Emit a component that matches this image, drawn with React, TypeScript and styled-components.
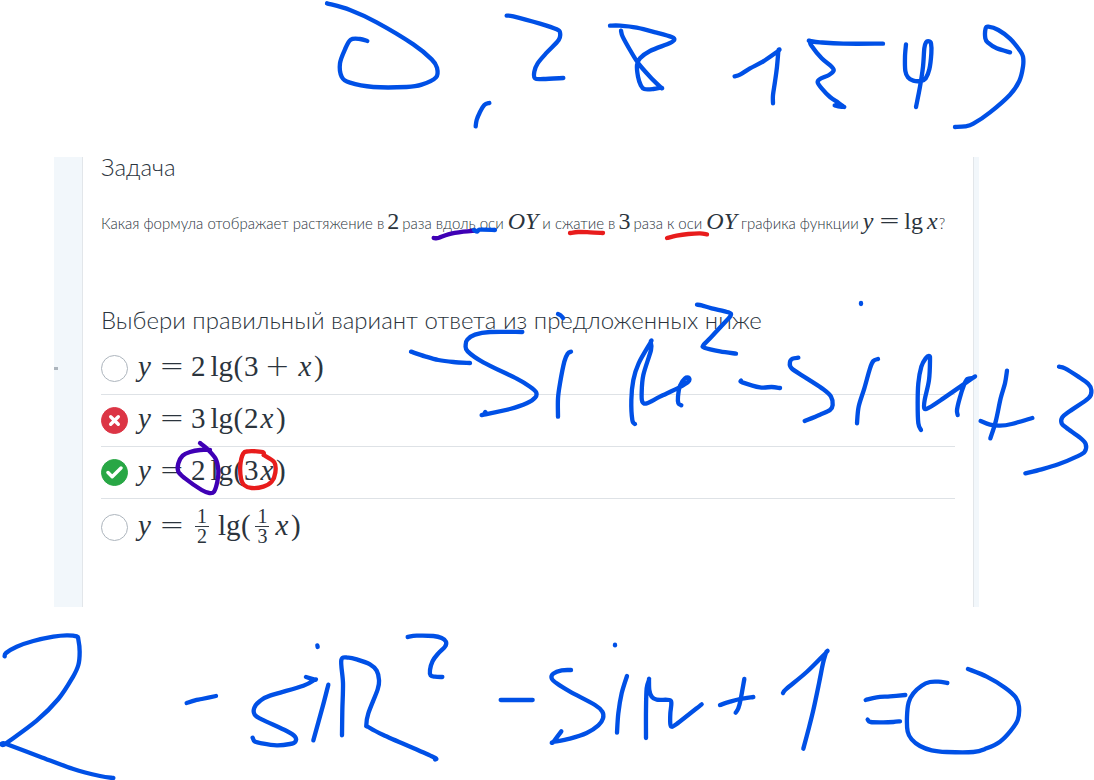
import React, { ReactNode } from 'react';
import styled, { createGlobalStyle } from 'styled-components';

const GlobalStyle = createGlobalStyle`
  *, *::before, *::after { box-sizing: border-box; }
  body { margin: 0; background: #fff; }
`;

const Board = styled.div`
  position: relative;
  min-height: 100vh;
  padding: 157px 115px 0 54px;
  overflow: hidden;
  color: #2b343d;
  font-family: Lato, 'Open Sans', sans-serif;
  font-weight: 300;
`;

const Page = styled.div`
  display: flex;
  min-height: 450px;
  background: #f2f7fb;
`;

const Gutter = styled.div`
  display: flex;
  align-items: center;
  width: 28px;
  padding-bottom: 28px;
`;

const Notch = styled.span`
  width: 4px;
  height: 3px;
  background: #adb5bd;
`;

const Card = styled.main`
  flex: 1;
  min-width: 0;
  margin-right: 5px;
  padding: 0 18px;
  background: #fff;
  border: 1px solid #e2e6ea;
  border-width: 0 1px;
`;

const Title = styled.h1`
  margin: 0;
  font-size: 24px;
  font-weight: 300;
  line-height: 20px;
`;

const Formula = styled.span<{ $big?: boolean }>`
  display: inline-flex;
  align-items: ${(p) => (p.$big ? 'center' : 'baseline')};
  padding-bottom: ${(p) => (p.$big ? 6 : 0)}px;
  font-family: 'Liberation Serif', serif;
  font-weight: 400;
  font-size: ${(p) => (p.$big ? 29 : 24)}px;
  line-height: 32px;
`;

const Var = styled.i`
  padding: 0 2px;
`;

const Sign = styled.span<{ $big?: boolean }>`
  width: ${(p) => (p.$big ? 38 : 30)}px;
  text-align: center;
  font-family: 'DejaVu Sans Light', 'DejaVu Sans', sans-serif;
  font-weight: 200;
  font-size: ${(p) => (p.$big ? 30 : 26)}px;
`;

const Func = styled.span`
  padding-left: 5px;
`;

const Paren = styled.span`
  width: 11px;
  text-align: center;
`;

const Fraction = styled.span`
  display: inline-flex;
  flex-direction: column;
  width: 14px;
  margin: 4px 4px 0;
  text-align: center;
  font-size: 20px;
  line-height: 19px;
  > :first-child { border-bottom: 1px solid #343d46; }
`;

const Question = styled.p`
  display: flex;
  align-items: baseline;
  gap: 3px;
  margin: 27px 0 0;
  font-size: 15px;
  line-height: 32px;
  white-space: nowrap;
  ${Var} { padding: 0 1px; }
  ${Func} { padding-left: 3px; }
`;

const Options = styled.fieldset`
  margin: 69px 0 0;
  padding: 0;
  border: 0;
  min-width: 0;
`;

const Legend = styled.legend`
  padding: 0;
  font-size: 24px;
  line-height: 24px;
  white-space: nowrap;
`;

const Option = styled.label<{ $tall?: boolean }>`
  display: flex;
  align-items: center;
  gap: 8px;
  height: ${(p) => (p.$tall ? 58 : 52)}px;
  border-bottom: 1px solid ${(p) => (p.$tall ? 'transparent' : '#dee2e6')};
`;

const OptionList = styled.div`
  padding-top: 11px;
`;

type Mark = 'none' | 'wrong' | 'right';
const markFill = { none: '#fff', wrong: '#dc3545', right: '#28a745' };

const RadioBox = styled.span`
  display: grid;
  width: 27px;
  height: 27px;
  > * { grid-area: 1 / 1; place-self: center; }
`;

const Radio = styled.input<{ $mark: Mark }>`
  appearance: none;
  width: 27px;
  height: 27px;
  margin: 0;
  border-radius: 50%;
  border: 1px solid ${(p) => (p.$mark === 'none' ? '#adb5bd' : markFill[p.$mark])};
  background: ${(p) => markFill[p.$mark]};
`;

const Ink = styled.svg`
  position: absolute;
  inset: 0;
  width: 100%;
  height: 100%;
  pointer-events: none;
  fill: none;
  stroke-linecap: round;
  stroke-linejoin: round;
`;

const blue = '#0050e6';
const violet = '#3f00b5';
const red = '#e81c1c';

type Group = { x: number; y: number; color: string; strokes: string[] };

// Pen samples, three units to a pixel, relative to the origin of each group.
const groups: Group[] = [
  {
    x: 310, y: 0, color: blue,
    strokes: [
      '51,10 120,30 200,67 310,133 365,178 381,203 378,232 335,254 290,261 190,261 120,248 95,230 90,190 105,148 122,119 150,117 172,123',
      '590,47 610,49 690,71 740,88 750,98 746,120 710,158 683,190 673,215 675,235 700,237 760,234',
      '900,77 930,77 980,83 1040,98 1085,111 1093,119 1080,129 1020,153 990,175 981,195 984,230 992,255 1003,267 1030,267 1053,263 1053,263 1020,230 985,190 960,150 938,110 933,92',
      '538,309 523,315 509,338 500,360 497,379',
    ],
  },
  {
    x: 680, y: 0, color: blue,
    strokes: [
      '164,229 180,224 210,205 250,184 295,153 295,153 291,200 285,245 279,285 279,310',
      '609,131 490,131 420,127 389,123 389,123 395,138 425,175 455,200 461,212 447,225 420,237 413,247 425,265 450,291 475,308 491,320 491,320 480,320 464,316',
      '678,133 675,170 676,213 684,232 700,242 722,243 737,235 748,208 754,160 753,130 747,124 738,127 733,145 729,200 720,260 708,321',
      '990,157 950,145 924,128 916,115 917,85 925,80 955,90 990,116 1020,152 1029,170 1029,200 1018,243 990,284 930,337 880,371 855,379 825,381',
    ],
  },
  {
    x: 400, y: 290, color: blue,
    strokes: [
      '33,185 75,199 115,210 160,216 210,219',
      '367,126 270,126 225,134 202,149 197,165 203,184 250,217 350,266 390,290 408,306 406,322 380,340 330,357 251,374 251,374 256,366',
      '513,185 503,191 493,215 480,280 474,325 474,380',
      '474,72 482,76 489,84',
      '705,402 697,390 694,330 700,270 716,220 752,157 752,157 753,180 730,255 725,310 727,335 740,340 780,320 838,292 865,275 867,264 855,265 840,287 834,320 835,340 844,346',
      '891,44 905,46 935,55 985,67 992,77 970,102 925,150 910,166 913,173 960,184 1008,191',
      '1023,272 1027,277 1080,292 1115,291 1140,294',
    ],
  },
  {
    x: 730, y: 290, color: blue,
    strokes: [
      '393,39 393,42',
      '205,203 188,206 180,216 185,235 230,265 280,298 303,320 308,345 300,360 270,374 224,393',
      '444,207 430,213 420,235 403,295 386,350 381,400',
      '573,420 565,400 563,340 565,280 574,230 587,205 598,198 600,210 597,270 584,330 583,355 597,353 640,325 728,264 728,264 712,267 702,285 689,325 681,360 683,375',
      '752,393 780,404 810,407 845,402 907,384',
      '831,242 825,280 812,325 797,395 781,445',
      '987,230 1005,235 1045,260 1075,282 1084,300 1076,324 1020,363 997,382 995,400 1010,414 1050,443 1067,462 1064,485 1040,500 985,523 935,538 886,550',
    ],
  },
  {
    x: 0, y: 600, color: blue,
    strokes: [
      '14,169 18,159 50,140 100,123 160,110 200,106 230,109 235,118 239,155 235,195 218,232 175,297 110,362 17,431 17,431 120,470 220,507 300,528 340,534',
      '560,309 585,301 605,297 648,288',
      '952,136 953,141',
      '918,231 944,239 944,239 910,257 810,287 780,303 763,323 764,344 785,358 860,393 885,410 886,425 870,432 830,436 785,430 764,424 758,413',
      '985,254 968,320 940,421',
    ],
  },
  {
    x: 300, y: 600, color: blue,
    strokes: [
      '126,406 127,330 129,250 124,180 145,173 170,178 210,193 230,212 237,240 233,268 205,340 199,375 205,381 250,405 395,469 405,478',
      '323,111 350,107 400,108 425,114 438,125 435,140 415,160 398,183 390,210 392,226 405,230 427,231',
      '602,300 698,300',
    ],
  },
  {
    x: 540, y: 600, color: blue,
    strokes: [
      '93,210 65,211 40,221 35,235 50,250 90,275 165,315 187,335 189,355 175,376 140,399 90,416 40,426 40,426 64,394',
      '225,134 225,136',
      '261,228 245,280 235,340 231,398',
      '318,414 318,330 320,265 327,240 327,240 328,270 335,290 350,299 388,300 394,310 391,340 391,372 395,380 410,372 485,313',
      '540,315 570,305 600,297 640,291',
      '613,237 602,298 595,325 587,338',
      '729,279 740,266 800,216 858,158 858,158 849,190 837,250 820,330 805,390 790,446',
    ],
  },
  {
    x: 770, y: 600, color: blue,
    strokes: [
      '287,300 320,292 360,289 406,285',
      '293,359 302,366 340,367 370,366 390,364',
      '532,249 505,245 480,246 455,257 430,280 416,307 411,350 413,395 425,418 450,438 485,451 530,456 610,456 650,445 690,425 720,395 743,360 747,320 737,292 705,263 650,230 594,207',
    ],
  },
  { x: 50, y: 145, color: violet, strokes: ['1151,279 1165,279 1195,268 1240,260 1275,257'] },
  { x: 50, y: 145, color: blue, strokes: ['1272,255 1282,260 1290,254 1335,255'] },
  {
    x: 50, y: 300, color: violet,
    strokes: ['450,429 470,445 496,475 505,510 502,545 492,575 478,579 455,570 405,535 385,515 385,490 398,467 420,456 450,450 480,450'],
  },
  {
    x: 50, y: 300, color: red,
    strokes: ['641,465 640,457 620,454 595,454 580,460 571,495 573,535 582,555 605,564 640,560 665,545 676,518 673,487 641,465'],
  },
  { x: 500, y: 145, color: red, strokes: ['210,264 235,261 270,262 309,264', '501,279 530,272 565,267 600,265 621,268'] },
];

// Joins the samples with a Catmull-Rom curve; a repeated sample makes a corner.
function smooth(samples: string) {
  const p = samples.split(' ').map((s) => s.split(',').map(Number));
  let d = `M${p[0]}`;
  for (let i = 0; i < p.length - 1; i++) {
    const a = p[i - 1] ?? p[i];
    const b = p[i];
    const c = p[i + 1];
    const e = p[i + 2] ?? c;
    d += `C${b[0] + (c[0] - a[0]) / 6},${b[1] + (c[1] - a[1]) / 6} ${c[0] - (e[0] - b[0]) / 6},${c[1] - (e[1] - b[1]) / 6} ${c}`;
  }
  return d;
}

function Handwriting() {
  return (
    <Ink aria-hidden="true">
      {groups.map((g, i) => (
        <g key={i} transform={`translate(${g.x} ${g.y}) scale(${1 / 3})`} stroke={g.color} strokeWidth={13}>
          {g.strokes.map((s) => <path key={s} d={smooth(s)} />)}
        </g>
      ))}
    </Ink>
  );
}

function Answer({ mark = 'none', tall, children }: { mark?: Mark; tall?: boolean; children: ReactNode }) {
  return (
    <Option $tall={tall}>
      <RadioBox>
        <Radio type="radio" name="answer" $mark={mark} />
        {mark === 'wrong' && (
          <svg width="13" height="13" viewBox="0 0 13 13" stroke="#fff" strokeWidth="3.4" strokeLinecap="round">
            <path d="M2.7 2.7l7.6 7.6M10.3 2.7l-7.6 7.6" />
          </svg>
        )}
        {mark === 'right' && (
          <svg width="17" height="13" viewBox="0 0 17 13" fill="none" stroke="#fff" strokeWidth="3.4" strokeLinecap="round" strokeLinejoin="round">
            <path d="M2 6.5l4.2 4.2L15 2" />
          </svg>
        )}
      </RadioBox>
      <Formula $big>
        <Var>y</Var>
        <Sign $big>=</Sign>
        {children}
      </Formula>
    </Option>
  );
}

export default function App() {
  return (
    <>
      <GlobalStyle />
      <Board>
        <Page>
          <Gutter><Notch /></Gutter>
          <Card>
            <Title>Задача</Title>
            <Question>
              <span>Какая формула отображает растяжение в</span>
              <Formula>2</Formula>
              <span>раза вдоль оси</span>
              <Formula><Var>OY</Var></Formula>
              <span>и сжатие в</span>
              <Formula>3</Formula>
              <span>раза к оси</span>
              <Formula><Var>OY</Var></Formula>
              <span>графика функции</span>
              <span>
                <Formula><Var>y</Var><Sign>=</Sign>lg<Func><Var>x</Var></Func></Formula>?
              </span>
            </Question>
            <Options>
              <Legend>Выбери правильный вариант ответа из предложенных ниже</Legend>
              <OptionList>
                <Answer>2<Func>lg</Func><Paren>(</Paren>3<Sign $big>+</Sign><Var>x</Var><Paren>)</Paren></Answer>
                <Answer mark="wrong">3<Func>lg</Func><Paren>(</Paren>2<Var>x</Var><Paren>)</Paren></Answer>
                <Answer mark="right">2<Func>lg</Func><Paren>(</Paren>3<Var>x</Var><Paren>)</Paren></Answer>
                <Answer tall>
                  <Fraction><span>1</span><span>2</span></Fraction>
                  <Func>lg</Func><Paren>(</Paren>
                  <Fraction><span>1</span><span>3</span></Fraction>
                  <Var>x</Var><Paren>)</Paren>
                </Answer>
              </OptionList>
            </Options>
          </Card>
        </Page>
        <Handwriting />
      </Board>
    </>
  );
}
